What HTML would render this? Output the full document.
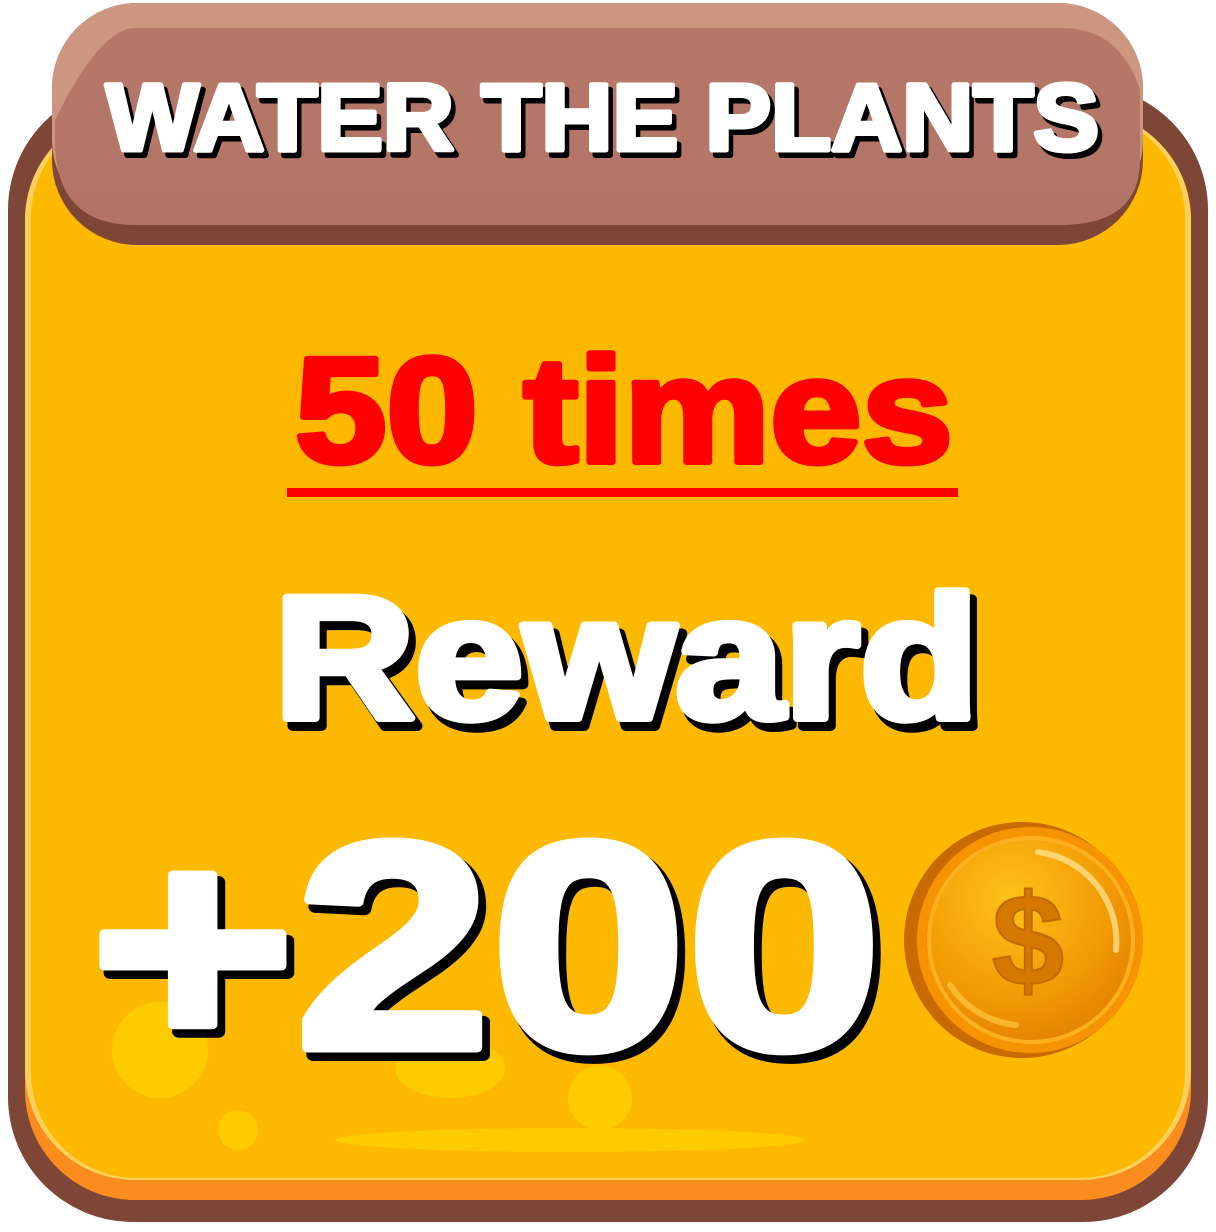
<!DOCTYPE html>
<html><head><style>
html,body{margin:0;padding:0;background:#fff;width:1216px;height:1232px;overflow:hidden}
svg{display:block}
text{font-family:"Liberation Sans",sans-serif;font-weight:bold}
</style></head><body>
<svg width="1216" height="1232" viewBox="0 0 1216 1232" xmlns="http://www.w3.org/2000/svg">
<defs>
<radialGradient id="cg" cx="0.4" cy="0.3" r="0.8">
<stop offset="0" stop-color="#ffc21a"/><stop offset="0.6" stop-color="#f29a05"/><stop offset="1" stop-color="#e07c00"/>
</radialGradient>
<linearGradient id="hb" x1="0" y1="0" x2="0" y2="1">
<stop offset="0" stop-color="#b57868"/><stop offset="1" stop-color="#b27466"/>
</linearGradient>
</defs>
<rect x="8" y="85" width="1200" height="1137" rx="125" fill="#7e4636"/>
<rect x="25" y="110" width="1166" height="1090" rx="110" fill="#fb8c1e"/>
<rect x="25" y="110" width="1166" height="1070" rx="110" fill="#ffd15a"/>
<rect x="31" y="112" width="1154" height="1066" rx="106" fill="#fdb900"/>
<circle cx="160" cy="1050" r="48" fill="#fdd000" opacity="0.8"/>
<circle cx="238" cy="1130" r="20" fill="#fdd000" opacity="0.8"/>
<circle cx="600" cy="1098" r="32" fill="#fdd000" opacity="0.8"/>
<ellipse cx="450" cy="1068" rx="55" ry="30" fill="#fdd000" opacity="0.8"/>
<ellipse cx="570" cy="1140" rx="235" ry="12" fill="#fdd000" opacity="0.8"/>
<rect x="52" y="3" width="1091" height="242" rx="85" fill="#7e4636"/>
<rect x="52" y="3" width="1091" height="222" rx="85" fill="#cc9680"/>
<path d="M135 28 H1062 Q1120 28 1140 90 V160 Q1140 225 1060 225 H135 Q55 225 55 140 V120 Q100 28 135 28Z" fill="url(#hb)"/>
<g font-size="95">
<text x="110" y="155" textLength="993" lengthAdjust="spacingAndGlyphs" fill="#000" stroke="#000" stroke-width="6" stroke-linejoin="round">WATER THE PLANTS</text>
<text x="106" y="150" textLength="993" lengthAdjust="spacingAndGlyphs" fill="#fff" stroke="#fff" stroke-width="5" stroke-linejoin="round">WATER THE PLANTS</text>
</g>
<text x="295" y="462" font-size="150" textLength="658" lengthAdjust="spacingAndGlyphs" fill="#fe0000" stroke="#fe0000" stroke-width="6" stroke-linejoin="round">50 times</text>
<rect x="287" y="488" width="671" height="9" fill="#fe0000"/>
<g font-size="175">
<text x="280" y="726" textLength="705" lengthAdjust="spacingAndGlyphs" fill="#000" stroke="#000" stroke-width="10" stroke-linejoin="round">Reward</text>
<text x="274" y="718" textLength="705" lengthAdjust="spacingAndGlyphs" fill="#fff" stroke="#fff" stroke-width="8" stroke-linejoin="round">Reward</text>
</g>
<g font-size="295">
<text x="96" y="1055" textLength="792" lengthAdjust="spacingAndGlyphs" fill="#000" stroke="#000" stroke-width="12" stroke-linejoin="round">+200</text>
<text x="90" y="1048" textLength="792" lengthAdjust="spacingAndGlyphs" fill="#fff" stroke="#fff" stroke-width="9" stroke-linejoin="round">+200</text>
</g>
<circle cx="1022" cy="940" r="118" fill="#c86a00"/>
<circle cx="1030" cy="940" r="113" fill="#f59300"/>
<circle cx="1031" cy="940" r="102" fill="url(#cg)" stroke="#ffb020" stroke-width="4"/>
<path d="M1038 852 A90 90 0 0 1 1116 950" fill="none" stroke="#ffe08a" stroke-width="6" stroke-linecap="round" opacity="0.8"/>
<path d="M950 985 A90 90 0 0 0 1016 1025" fill="none" stroke="#ffc840" stroke-width="6" stroke-linecap="round" opacity="0.7"/>
<text x="1028" y="985" font-size="130" text-anchor="middle" fill="#d47800" stroke="#c06a00" stroke-width="2">$</text>
</svg>
</body></html>
